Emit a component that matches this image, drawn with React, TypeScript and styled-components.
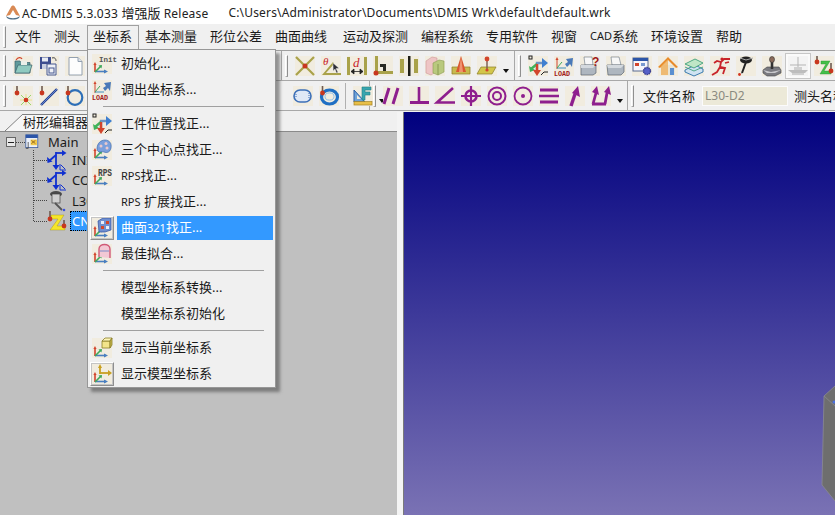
import React from "react";
import styled, { createGlobalStyle } from "styled-components";

const FONT = `"Noto Sans", "Noto Sans CJK SC", sans-serif`;

const Global = createGlobalStyle`
  html, body { margin: 0; padding: 0; background: #f0f0f0; }
  * { box-sizing: border-box; }
  body { font-family: ${FONT}; }
`;

const Root = styled.div`
  position: relative;
  width: 835px;
  height: 515px;
  overflow: hidden;
  display: flex;
  flex-direction: column;
  background: #f0f0f0;
  color: #1a1a1a;
`;

const TitleBar = styled.div`
  height: 24px;
  flex: none;
  background: #fff;
  display: flex;
  align-items: center;
  padding-left: 5px;
  font-size: 12px;
  color: #222;
  white-space: nowrap;
`;
const TitleText = styled.span`
  margin-left: 1px;
  letter-spacing: 0.2px;
`;
const TitleCjk = styled.span`
  font-size: 13px;
  letter-spacing: 0;
`;
const TitlePath = styled.span`
  margin-left: 20px;
  letter-spacing: 0.17px;
`;

const MenuBar = styled.div`
  height: 27px;
  flex: none;
  display: flex;
  align-items: stretch;
  border-bottom: 1px solid #a0a0a0;
  background: #f0f0f0;
`;
const Grip = styled.div<{ $mr?: number }>`
  width: 3px;
  height: 22px;
  margin: 0 ${(p) => p.$mr ?? 7}px 0 3px;
  align-self: center;
  flex: none;
  border: 1px solid #a9a9a9;
  border-right-color: #8f8f8f;
  border-top-color: #fff;
  border-left-color: #fff;
`;
const MenuItem = styled.div<{ $active?: boolean; $w: number; $ml?: number }>`
  width: ${(p) => p.$w}px;
  flex: none;
  margin-left: ${(p) => p.$ml ?? 0}px;
  margin-top: 1px;
  padding-bottom: 6px;
  display: flex;
  align-items: center;
  justify-content: center;
  font-size: 13px;
  white-space: nowrap;
  border: 1px solid ${(p) => (p.$active ? "#a0a0a0" : "transparent")};
  border-bottom: none;
`;
const Small = styled.span`
  font-size: 11px;
`;

const ToolRow = styled.div`
  height: 30px;
  flex: none;
  display: flex;
  border-bottom: 1px solid #a8a8a8;
  background: #f0f0f0;
`;
const Segment = styled.div<{ $w: number }>`
  width: ${(p) => p.$w}px;
  flex: none;
  display: flex;
  align-items: center;
  border-right: 1px solid #a8a8a8;
  &:last-child { border-right: none; flex: 1; overflow: hidden; }
`;
const Icons = styled.div<{ $ml?: number }>`
  display: flex;
  gap: 6px;
  align-items: center;
  margin-left: ${(p) => p.$ml ?? 0}px;
`;
const IconBox = styled.div<{ $raised?: boolean }>`
  width: 20px;
  height: 20px;
  flex: none;
  background: #f1ecdf;
  svg { display: block; width: 20px; height: 20px; overflow: visible; }
  ${(p) =>
    p.$raised &&
    `background: #f4f4f4;
     outline: 2px solid #fafafa;
     box-shadow: 0 0 0 3px #c6c6c6;`}
`;
const DropArrow = styled.div`
  width: 0;
  height: 0;
  flex: none;
  margin-left: 6px;
  margin-top: 11px;
  border: 3.5px solid transparent;
  border-top: 4px solid #111;
  border-bottom: none;
`;
const VSep = styled.div`
  width: 1px;
  height: 26px;
  flex: none;
  margin: 0 7px 0 6px;
  background: #b0b0b0;
`;
const FieldLabel = styled.span<{ $ml?: number }>`
  font-size: 13px;
  margin-left: ${(p) => p.$ml ?? 0}px;
  white-space: nowrap;
  flex: none;
`;
const FileInput = styled.div`
  width: 86px;
  height: 20px;
  flex: none;
  margin: 0 6px 0 7px;
  background: #ece9d8;
  border: 1px solid #fbfbfb;
  color: #8a8a80;
  font-size: 12px;
  line-height: 18px;
  padding-left: 2px;
`;

const Workspace = styled.div`
  flex: 1;
  display: flex;
  min-height: 0;
  margin-top: 1px;
`;
const LeftPane = styled.div`
  width: 397px;
  flex: none;
  display: flex;
  flex-direction: column;
`;
const TabStrip = styled.div`
  height: 19px;
  flex: none;
  display: flex;
  align-items: flex-end;
  padding-left: 5px;
  background: #f0f0f0;
`;
const Tab = styled.div`
  display: flex;
  align-items: flex-end;
  height: 17px;
  font-size: 13px;
  svg { display: block; width: 18px; height: 17px; flex: none; }
`;
const TabLabel = styled.div`
  height: 17px;
  line-height: 14px;
  width: 90px;
  border-top: 1px solid #808080;
  background: #f7f7f7;
  white-space: nowrap;
`;
const TreePanel = styled.div`
  flex: 1;
  background: #c0c0c0;
  padding: 2px 0 0 6px;
  border-top: 1px solid #8a8a8a;
  display: flex;
  flex-direction: column;
  font-size: 13px;
`;
const RootRow = styled.div`
  display: flex;
  align-items: center;
  height: 16px;
  flex: none;
`;
const Expander = styled.div`
  width: 10px;
  height: 10px;
  flex: none;
  border: 1px solid #666;
  background: #e8e8e8;
  display: flex;
  align-items: center;
  justify-content: center;
  &::after { content: ""; width: 6px; height: 1px; background: #222; }
`;
const DotsH = styled.div<{ $w: number }>`
  width: ${(p) => p.$w}px;
  flex: none;
  border-top: 1px dotted #444;
`;
const TreeIcon = styled.div<{ $w?: number }>`
  width: ${(p) => p.$w ?? 20}px;
  height: ${(p) => p.$w ?? 20}px;
  flex: none;
  svg { display: block; width: 100%; height: 100%; overflow: visible; }
`;
const RootLabel = styled.span`
  margin-left: 7px;
`;
const ChildList = styled.div`
  margin-left: 27px;
  border-left: 1px dotted #444;
  height: 71px;
  display: flex;
  flex-direction: column;
`;
const ChildRow = styled.div`
  height: 20.33px;
  display: flex;
  align-items: center;
  flex: none;
`;
const ChildLabel = styled.span<{ $sel?: boolean }>`
  margin-left: 3px;
  height: 20px;
  line-height: 18px;
  padding: 0 1px;
  white-space: nowrap;
  border: 1px dotted ${(p) => (p.$sel ? "#000" : "transparent")};
  background: ${(p) => (p.$sel ? "#3399ff" : "transparent")};
  color: ${(p) => (p.$sel ? "#fff" : "#1a1a1a")};
  width: ${(p) => (p.$sel ? "40px" : "auto")};
`;

const Splitter = styled.div`
  width: 7px;
  flex: none;
  background: #f4f4f4;
  border-right: 1px solid #7a7a7a;
`;
const Viewport = styled.div`
  flex: 1;
  position: relative;
  background: linear-gradient(180deg, #00007f 0%, #7a72b4 100%);
  svg { position: absolute; right: 0; bottom: 14px; display: block; }
`;

const Dropdown = styled.div`
  position: absolute;
  left: 87px;
  top: 49px;
  width: 189px;
  height: 339px;
  padding: 0 1px;
  background: #f0f0f0;
  border: 1px solid #979797;
  box-shadow: 4px 4px 3px rgba(70, 70, 70, 0.55);
  display: flex;
  flex-direction: column;
`;
const DropRow = styled.div`
  height: 26px;
  flex: none;
  display: flex;
  align-items: flex-end;
  font-size: 13px;
`;
const Slot = styled.div<{ $raised?: boolean }>`
  width: 24px;
  height: 24px;
  flex: none;
  margin-left: 1px;
  display: flex;
  align-items: center;
  justify-content: center;
  border: 1px solid transparent;
  ${(p) =>
    p.$raised &&
    `border-color: #fff #8e8e8e #8e8e8e #fff;
     outline: 1px solid #c4c4c4;
     outline-offset: -2px;`}
  svg { display: block; width: 20px; height: 20px; overflow: visible; }
`;
const DropLabel = styled.div<{ $hl?: boolean }>`
  width: 156px;
  height: 24px;
  margin-left: 3px;
  padding-left: 4px;
  line-height: 22px;
  white-space: nowrap;
  background: ${(p) => (p.$hl ? "#3399ff" : "transparent")};
  color: ${(p) => (p.$hl ? "#fff" : "#1a1a1a")};
`;
const DropSep = styled.div`
  height: 8px;
  flex: none;
  display: flex;
  align-items: flex-end;
  padding: 0 10px 0 14px;
  &::after {
    content: "";
    width: 100%;
    height: 1px;
    margin-bottom: 3px;
    background: #a0a0a0;
  }
`;

const Probe = ({ x = 5, y = 9, h = 8 }: { x?: number; y?: number; h?: number }) => (
  <>
    <rect x={x - 0.8} y={y - h} width={1.6} height={h} fill="#6e5a50" />
    <circle cx={x} cy={y} r={2.4} fill="#c8371f" />
  </>
);
const OLIVE = "#a9a24a";
const PURPLE = "#8e1f8e";

const CoordBase = () => (
  <>
    <path d="M3 18V10" stroke="#d2452c" strokeWidth="1.6" />
    <path d="M1.4 11 3 8l1.6 3z" fill="#d2452c" />
    <path d="M3 17.5h11" stroke="#4a7fc0" strokeWidth="1.6" />
    <path d="M12 15.5l4 2-4 2z" fill="#4a7fc0" />
    <path d="M3 18l6-6" stroke="#3fa85a" strokeWidth="1.6" />
    <path d="M6.5 11.5 10 11l-.5 3.5z" fill="#3fa85a" />
  </>
);
const LoadArt = () => (
  <>
    <path d="M3 13V3" stroke="#d2452c" />
    <path d="M1.500 4 3 1l1.500 3z" fill="#d2452c" />
    <path d="M3 12h9" stroke="#3f8fbf" />
    <path d="M3 12l5-6" stroke="#3fa85a" />
    <path d="M19 2l-1 9-2-3-3 3-2-3 3-2-2-3z" fill="#4a79b8" />
    <text x="0" y="19.500" fontFamily="Liberation Mono, monospace" fontWeight="700" fontSize="6.700" fill="#a01818">LOAD</text>
  </>
);
const CoordArt = () => (
  <>
    <rect x="1" y="0" width="3" height="3" fill="none" stroke="#222" />
    <path d="M9 17V7h6" stroke="#6f93c4" strokeWidth="2.400" fill="none" />
    <path d="M14 2l6 5-6 5z" fill="#3f7fd0" />
    <path d="M9 8 3 13" stroke="#3fb35a" strokeWidth="2.400" />
    <path d="M1 10l1 6 5-2z" fill="#3fb35a" />
    <path d="M9 8v8" stroke="#d2452c" strokeWidth="2.400" />
    <path d="M5 14h8l-4 6z" fill="#d2452c" />
    <path d="M13 19l3-3h4" stroke="#222" fill="none" />
  </>
);
const Beige = () => <rect width="20" height="20" fill="#f1ecdf" />;

const I: Record<string, React.ReactNode> = {
  open: (
    <svg viewBox="0 0 20 20">
      <path d="M2 5h5l1 1.500h9V17H2z" fill="#5f9a9c" stroke="#39606a" strokeWidth=".7" />
      <path d="M5 9h14l-2.500 8H2z" fill="#8fcac0" stroke="#39606a" strokeWidth=".7" />
      <rect x="8" y="5" width="6" height="4" fill="#e9efe9" />
      <path d="M3 4c2-3 5-3 6-1" stroke="#d2452c" strokeWidth="1.200" fill="none" />
    </svg>
  ),
  save: (
    <svg viewBox="0 0 20 20">
      <path d="M1 1h11v12H1z" fill="#3d4d8f" />
      <rect x="3" y="1.500" width="6" height="4" fill="#e8ecf4" />
      <rect x="3" y="8" width="7" height="5" fill="#c9cfe0" />
      <path d="M13 2c3-1 4 1 4 3" stroke="#444" fill="none" />
      <path d="M8 8h9v11H8z" fill="#eef0f6" stroke="#46588f" />
      <rect x="10" y="12" width="5" height="5" fill="none" stroke="#46588f" />
    </svg>
  ),
  doc: (
    <svg viewBox="0 0 20 20">
      <path d="M4 1.500h9l4 4V19H4z" fill="#fdfdfd" stroke="#93a0b0" />
      <path d="M13 1.500v4h4" fill="#dfe4ea" stroke="#93a0b0" />
    </svg>
  ),
  probePoint: (
    <svg viewBox="0 0 20 20">
      <Probe x={4} y={7} h={7} />
      <path d="M8 9l10 10M18 9 8 19" stroke="#9ad76a" strokeWidth="1" />
      <path d="M13 8v11M7 14h12" stroke="#e9e07a" strokeWidth=".8" />
      <circle cx="13" cy="14" r="2.300" fill="#d2341f" />
    </svg>
  ),
  probeLine: (
    <svg viewBox="0 0 20 20">
      <Probe x={3} y={7} h={7} />
      <path d="M2 19 18 3" stroke="#1c3c95" strokeWidth="2.400" />
      <path d="M2 19 18 3" stroke="#9cb8e8" strokeWidth=".6" />
    </svg>
  ),
  probeCircle: (
    <svg viewBox="0 0 20 20">
      <circle cx="10" cy="11.500" r="7.300" fill="none" stroke="#2d6fb8" strokeWidth="2.200" />
      <Probe x={3} y={7} h={7} />
    </svg>
  ),
  slot: (
    <svg viewBox="0 0 20 20">
      <rect x="1" y="4" width="17" height="12" rx="6" fill="#dfe8f6" stroke="#3c6fb8" strokeWidth="1.600" />
      <path d="M3 8v4" stroke="#3c6fb8" strokeDasharray="1 1" />
      <path d="M16 7v6" stroke="#3c6fb8" strokeDasharray="1 1" />
    </svg>
  ),
  coil: (
    <svg viewBox="0 0 20 20">
      <ellipse cx="10.500" cy="11" rx="8" ry="7" fill="none" stroke="#1f6fc4" strokeWidth="3.200" />
      <ellipse cx="10.500" cy="10.500" rx="4.500" ry="3.600" fill="none" stroke="#8ec0ea" strokeWidth="1" />
      <Probe x={3.500} y={7} h={7} />
    </svg>
  ),
  ruler: (
    <svg viewBox="0 0 20 20">
      <path d="M1 16V4l11 12z" fill="#6ea3d8" stroke="#2a5fa8" />
      <path d="M4 13V9l4 4z" fill="#f1ecdf" />
      <path d="M9 1h9v3h-6v2h5v3h-5v5H9z" fill="#38a5ae" stroke="#1e7f88" strokeWidth=".6" />
      <rect x="1" y="15.500" width="18" height="3.500" fill="#e8bf48" stroke="#9a7a20" strokeWidth=".6" />
    </svg>
  ),
  cross: (
    <svg viewBox="0 0 20 20">
      <path d="M1 1l18 18M19 1 1 19" stroke={OLIVE} strokeWidth="2.200" />
      <circle cx="10" cy="10" r="2.500" fill="#c8371f" />
    </svg>
  ),
  theta: (
    <svg viewBox="0 0 20 20">
      <text x="2" y="9" fontFamily="Liberation Serif, serif" fontStyle="italic" fontSize="11" fill="#c8242a">θ</text>
      <path d="M1 19 12 6l1 2L5 17h15v2z" fill={OLIVE} />
      <path d="M12 7l.2 8 1.800-2 1.500 4 1.500-.7L15 12.500l3-.3z" fill="#2d2d35" stroke="#eee" strokeWidth=".4" />
    </svg>
  ),
  dist: (
    <svg viewBox="0 0 20 20">
      <rect x="0" y="1" width="3" height="18" fill={OLIVE} />
      <rect x="17" y="1" width="3" height="18" fill={OLIVE} />
      <text x="6" y="11" fontFamily="Liberation Serif, serif" fontStyle="italic" fontSize="13" fill="#c8242a">d</text>
      <path d="M4 15.500h12M4 15.500l3-2.500v5zM16 15.500l-3-2.500v5z" stroke="#222" strokeWidth=".8" fill="#222" />
    </svg>
  ),
  perpL: (
    <svg viewBox="0 0 20 20">
      <path d="M2 0h3v15h15v3H2z" fill={OLIVE} />
      <path d="M7 8h6v7h-3v-4H7z" fill="#2a2a22" />
      <circle cx="3" cy="17" r="2.500" fill="#c8371f" />
    </svg>
  ),
  bars: (
    <svg viewBox="0 0 20 20">
      <rect x="1" y="3" width="4" height="14" fill={OLIVE} />
      <rect x="9" y="0" width="2.500" height="20" fill="#1d1d16" />
      <rect x="15" y="3" width="4" height="14" fill={OLIVE} />
    </svg>
  ),
  panels: (
    <svg viewBox="0 0 20 20">
      <path d="M1 5l6-4 5 1v13l-6 4-5-2z" fill="#eec5c5" stroke="#c99" strokeWidth=".6" />
      <path d="M8 7l6-3 5 1v11l-6 3-5-2z" fill="#b9c97e" stroke="#8a9a52" strokeWidth=".6" />
      <path d="M13 8v11" stroke="#8a9a52" />
    </svg>
  ),
  cone: (
    <svg viewBox="0 0 20 20">
      <path d="M1 11h18v7H1z" fill="#c9b94e" stroke="#8a7e2a" strokeWidth=".7" />
      <path d="M10 0l5 16H5z" fill="#d9582f" />
      <path d="M10 0l2 16H8z" fill="#ef9470" />
    </svg>
  ),
  plate: (
    <svg viewBox="0 0 20 20">
      <path d="M4 11h15l-4 7H0z" fill="#d3c64a" stroke="#8a7e2a" strokeWidth=".7" />
      <path d="M10 3v11" stroke="#7a5a4a" strokeWidth="1.400" />
      <circle cx="10" cy="3" r="2.400" fill="#d2452c" />
      <circle cx="10" cy="14" r="1.600" fill="#d2452c" />
    </svg>
  ),
  coord: (
    <svg viewBox="0 0 20 20">
      <CoordArt />
    </svg>
  ),
  load: (
    <svg viewBox="0 0 20 20">
      <LoadArt />
    </svg>
  ),
  printerQ: (
    <svg viewBox="0 0 20 20">
      <path d="M4 1h8l1 8H5z" fill="#f7f7f7" stroke="#7a8590" strokeWidth=".7" />
      <path d="M1 9h15v8l-3 2H1z" fill="#aeb6bf" stroke="#5c6570" strokeWidth=".7" />
      <path d="M1 9h12l3 0-3 3H1z" fill="#d4d9de" />
      <text x="12" y="10" fontFamily="Liberation Sans, sans-serif" fontWeight="700" fontSize="12" fill="#a01818">?</text>
    </svg>
  ),
  printer: (
    <svg viewBox="0 0 20 20">
      <path d="M5 1h8l2 8H6z" fill="#f7f7f7" stroke="#7a8590" strokeWidth=".7" />
      <path d="M1 9h17v7l-3 3H2z" fill="#aeb6bf" stroke="#5c6570" strokeWidth=".7" />
      <path d="M1 9h17l-3 3H2z" fill="#d4d9de" />
    </svg>
  ),
  windowGear: (
    <svg viewBox="0 0 20 20">
      <rect x="1" y="2" width="15" height="13" fill="#f6f6fb" stroke="#5a6a90" />
      <rect x="1" y="2" width="15" height="3" fill="#2c55a8" />
      <rect x="3" y="7" width="4" height="3" fill="#d2452c" />
      <rect x="9" y="7" width="4" height="3" fill="#7a9ad0" />
      <circle cx="15" cy="15" r="3.500" fill="#5560c8" stroke="#3a3f90" strokeDasharray="1.500 .7" strokeWidth="1.400" />
    </svg>
  ),
  house: (
    <svg viewBox="0 0 20 20">
      <path d="M3 9h14v10H3z" fill="#e9e4d4" />
      <path d="M12 12h4v7h-4z" fill="#5a8fd0" />
      <path d="M0 11 10 1l10 10-2 1L10 4 2 12z" fill="#e88a2a" />
      <path d="M3 10l7-7v16H3z" fill="#f0a84a" opacity=".7" />
    </svg>
  ),
  layers: (
    <svg viewBox="0 0 20 20">
      <path d="M1 14l10-5 8 4v3l-9 4-9-4z" fill="#cfe3f2" stroke="#2a6fa8" strokeWidth=".9" />
      <path d="M1 8l10-5 8 4-9 5z" fill="#bfe6c6" stroke="#3f9f7a" strokeWidth=".9" />
      <path d="M1 11l9 4 9-4" stroke="#3f9f7a" fill="none" strokeWidth=".9" />
    </svg>
  ),
  runner: (
    <svg viewBox="0 0 20 20">
      <path d="M20 3h-6l-3 3-4-1-3 2M11 6l-1 5 5 1-2 6M10 11l-3 5-5 3M15 7l4-1" stroke="#c8242a" strokeWidth="1.800" fill="none" />
      <circle cx="12" cy="3" r="1.600" fill="#c8242a" />
    </svg>
  ),
  blackProbe: (
    <svg viewBox="0 0 20 20">
      <ellipse cx="10" cy="4" rx="6" ry="3.500" fill="#222" />
      <path d="M4 2l6 2 7-2" stroke="#aaa" fill="none" />
      <path d="M10 6 6 17" stroke="#222" strokeWidth="2" />
      <path d="M6 17 4 19" stroke="#b8b8b8" />
      <circle cx="3.500" cy="18.500" r="1.400" fill="#d2341f" />
    </svg>
  ),
  joystick: (
    <svg viewBox="0 0 20 20">
      <path d="M1 14l4-3h12l2 3v3l-6 3H5l-4-3z" fill="#7a7a80" stroke="#444" strokeWidth=".6" />
      <path d="M1 14l8 2 10-2-6 3H5z" fill="#c8c8cc" />
      <path d="M10 4v9" stroke="#333" strokeWidth="2.600" />
      <ellipse cx="10" cy="3.500" rx="2.500" ry="3" fill="#8a6a5a" stroke="#333" strokeWidth=".6" />
    </svg>
  ),
  fadedCross: (
    <svg viewBox="0 0 20 20">
      <path d="M10 1v13M2 9h16" stroke="#b5b5b5" />
      <path d="M0 14h20l-3 3H4z" fill="#bdbdbd" />
      <path d="M6 11h8v3H6z" fill="#d0d0d0" />
      <path d="M4 17h12v2H4z" fill="#cfcfcf" />
    </svg>
  ),
  zprobe: (
    <svg viewBox="0 0 20 20">
      <path d="M7 5h9L10 15h7v3H6l6-10H7z" fill="#43c04a" stroke="#2a8a30" strokeWidth=".4" />
      <Probe x={3} y={6} h={6} />
      <Probe x={17} y={15} h={8} />
    </svg>
  ),
  parallel: (
    <svg viewBox="0 0 20 20">
      <path d="M6 2 1 18M15 2l-5 16" stroke={PURPLE} strokeWidth="3" />
    </svg>
  ),
  perp: (
    <svg viewBox="0 0 20 20">
      <path d="M10 1v15" stroke={PURPLE} strokeWidth="2.600" />
      <path d="M1 16.500h19" stroke={PURPLE} strokeWidth="3" />
    </svg>
  ),
  angle: (
    <svg viewBox="0 0 20 20">
      <path d="M18 2 2 16.500h18" stroke={PURPLE} strokeWidth="2.600" fill="none" />
    </svg>
  ),
  target: (
    <svg viewBox="0 0 20 20">
      <circle cx="10" cy="10" r="5.500" fill="none" stroke={PURPLE} strokeWidth="2.600" />
      <path d="M10 0v20M0 10h20" stroke={PURPLE} strokeWidth="2.200" />
    </svg>
  ),
  concentric: (
    <svg viewBox="0 0 20 20">
      <circle cx="10" cy="10" r="8.500" fill="none" stroke={PURPLE} strokeWidth="2" />
      <circle cx="10" cy="10" r="4" fill="none" stroke={PURPLE} strokeWidth="2" />
    </svg>
  ),
  dotCircle: (
    <svg viewBox="0 0 20 20">
      <circle cx="10" cy="10" r="8.500" fill="none" stroke={PURPLE} strokeWidth="1.800" />
      <circle cx="10" cy="10" r="2" fill={PURPLE} />
    </svg>
  ),
  symmetry: (
    <svg viewBox="0 0 20 20">
      <path d="M1 4h18M1 16h18" stroke={PURPLE} strokeWidth="3" />
      <path d="M0 10h20" stroke={PURPLE} strokeWidth="2.500" />
    </svg>
  ),
  runout: (
    <svg viewBox="0 0 20 20">
      <path d="M6 20 10 8" stroke={PURPLE} strokeWidth="3.400" />
      <path d="M13 0l2 11-8-4z" fill={PURPLE} />
    </svg>
  ),
  runout2: (
    <svg viewBox="0 0 20 20">
      <path d="M2 18 5 7M14 18l2-11M1 18h14" stroke={PURPLE} strokeWidth="2.800" fill="none" />
      <path d="M6 0l2 9-7-3zM18 0l2 9-7-3z" fill={PURPLE} />
    </svg>
  ),
  init: (
    <svg viewBox="0 0 20 20">
      <Beige />
      <CoordBase />
      <text x="7" y="8" fontFamily="Liberation Mono, monospace" fontWeight="700" fontSize="7.500" fill="#555">Init</text>
    </svg>
  ),
  loadM: (
    <svg viewBox="0 0 20 20">
      <Beige />
      <LoadArt />
    </svg>
  ),
  coordM: (
    <svg viewBox="0 0 20 20">
      <Beige />
      <CoordArt />
    </svg>
  ),
  threeM: (
    <svg viewBox="0 0 20 20">
      <Beige />
      <CoordBase />
      <path d="M5 9c0-6 4-9 8-9s7 3 6 8-5 5-7 4-6 2-7-3z" fill="#7a9fdc" stroke="#2f5fa8" strokeWidth=".6" />
      <circle cx="9" cy="6" r="1.500" fill="#e9c8cc" />
      <circle cx="14" cy="3.500" r="1.500" fill="#e9c8cc" />
      <circle cx="15" cy="8" r="1.500" fill="#e9c8cc" />
    </svg>
  ),
  rpsM: (
    <svg viewBox="0 0 20 20">
      <Beige />
      <CoordBase />
      <text x="6" y="10" fontFamily="Liberation Mono, monospace" fontWeight="700" fontSize="11" textLength="14" lengthAdjust="spacingAndGlyphs" fill="#444">RPS</text>
    </svg>
  ),
  surfM: (
    <svg viewBox="0 0 20 20">
      <Beige />
      <CoordBase />
      <path d="M6 3l5-3h8v12l-6 2H7z" fill="#6f8fd0" stroke="#2f4fa0" strokeWidth=".7" />
      <rect x="9" y="3" width="3" height="3" fill="#e8eefb" />
      <rect x="14" y="3" width="3" height="3" fill="#d2452c" />
      <rect x="9" y="8" width="3" height="3" fill="#d2452c" />
      <rect x="14" y="8" width="3" height="3" fill="#e8eefb" />
    </svg>
  ),
  bestM: (
    <svg viewBox="0 0 20 20">
      <Beige />
      <CoordBase />
      <path d="M7 13V5c0-6 11-6 11 0v9" fill="#f2c8d4" stroke="#d05a78" strokeWidth="1.400" />
      <path d="M8 7h9" stroke="#7a8ac8" />
    </svg>
  ),
  cubeM: (
    <svg viewBox="0 0 20 20">
      <Beige />
      <CoordBase />
      <path d="M10 3h8v7h-8z" fill="#f2e48a" stroke="#8a7e2a" strokeWidth=".8" />
      <path d="M10 3l3-3h7l-2 3z" fill="#fbf3b8" stroke="#8a7e2a" strokeWidth=".8" />
      <path d="M18 3l2-3v7l-2 3z" fill="#c9b94e" stroke="#8a7e2a" strokeWidth=".8" />
    </svg>
  ),
  modelM: (
    <svg viewBox="0 0 20 20">
      <Beige />
      <CoordBase />
      <path d="M8 10V3" stroke="#c9a020" strokeWidth="1.800" />
      <path d="M6 4l2-4 2 4z" fill="#c9a020" />
      <path d="M8 9h9" stroke="#c9a020" strokeWidth="1.800" />
      <path d="M16 6l4 3-4 3z" fill="#c9a020" />
    </svg>
  ),
  mainTree: (
    <svg viewBox="0 0 20 20">
      <rect x="1" y="1" width="15" height="16" fill="#eaf0fa" stroke="#3a5a9a" />
      <rect x="1" y="1" width="15" height="4" fill="#2c55a8" />
      <rect x="7" y="7" width="8" height="7" fill="#f2c94a" />
      <path d="M8 8l5 4M13 8l-5 4" stroke="#8a5a1a" />
      <path d="M1 18h3v-8" stroke="#444" fill="none" />
    </svg>
  ),
  treeCoord: (
    <svg viewBox="0 0 20 20">
      <path d="M9 2v14" stroke="#1030d0" strokeWidth="1.800" />
      <path d="M9 3h9" stroke="#1030d0" strokeWidth="1.800" />
      <path d="M15 0l4.500 3L15 6z" fill="#1030d0" />
      <path d="M9 5 2 11" stroke="#1030d0" strokeWidth="1.800" />
      <path d="M0 7l.5 6 5-1.500z" fill="#1030d0" />
      <path d="M5.500 15h7L9 20z" fill="#1030d0" />
      <path d="M13 14v6h6" fill="none" stroke="#1030d0" />
      <path d="M14 15l4 4" stroke="#1030d0" />
    </svg>
  ),
  treeProbe: (
    <svg viewBox="0 0 20 20">
      <ellipse cx="9" cy="3" rx="6" ry="3" fill="#4a4a4a" />
      <rect x="5" y="3" width="8" height="9" fill="#cfcfcf" stroke="#444" strokeWidth=".7" />
      <path d="M8 12l7 7" stroke="#555" strokeWidth="1.800" />
      <circle cx="17" cy="19" r="1.300" fill="#3a50e0" />
    </svg>
  ),
  treeZ: (
    <svg viewBox="0 0 20 20">
      <path d="M4 4h13L10 15h8v4H3l8-11H4z" fill="#f5e52a" stroke="#a09010" strokeWidth=".4" />
      <Probe x={3} y={8} h={8} />
      <Probe x={17} y={15} h={6} />
    </svg>
  ),
  logo: (
    <svg viewBox="0 0 16 16">
      <path d="M1 12 6 3c1-2 3-2 4 0l5 9-4-1-3-5-3 5z" fill="#d98a55" />
      <path d="M1 12c4 3 10 3 14 0l-1 2c-3 2-9 2-12 0z" fill="#4f6f88" />
    </svg>
  ),
};

const IconStrip = ({ names }: { names: string[] }) => (
  <>
    {names.map((n) => (
      <IconBox key={n}>{I[n]}</IconBox>
    ))}
  </>
);

type Entry =
  | { sep: true }
  | { icon?: string; label: React.ReactNode; hl?: boolean; raised?: boolean; sep?: false };

const menuEntries: Entry[] = [
  { icon: "init", label: "初始化..." },
  { icon: "loadM", label: "调出坐标系..." },
  { sep: true },
  { icon: "coordM", label: "工件位置找正..." },
  { icon: "threeM", label: "三个中心点找正..." },
  { icon: "rpsM", label: <><Small>RPS</Small>找正...</> },
  { label: <><Small>RPS</Small> 扩展找正...</> },
  { icon: "surfM", label: <>曲面<Small>321</Small>找正...</>, hl: true, raised: true },
  { icon: "bestM", label: "最佳拟合..." },
  { sep: true },
  { label: "模型坐标系转换..." },
  { label: "模型坐标系初始化" },
  { sep: true },
  { icon: "cubeM", label: "显示当前坐标系" },
  { icon: "modelM", label: "显示模型坐标系", raised: true },
];

const topMenus: { label: React.ReactNode; w: number; active?: boolean; ml?: number }[] = [
  { label: "文件", w: 39 },
  { label: "测头", w: 39 },
  { label: "坐标系", w: 52, active: true },
  { label: "基本测量", w: 65 },
  { label: "形位公差", w: 65 },
  { label: "曲面曲线", w: 65 },
  { label: "运动及探测", w: 78, ml: 3 },
  { label: "编程系统", w: 65 },
  { label: "专用软件", w: 65 },
  { label: "视窗", w: 39 },
  { label: <><Small>CAD</Small>系统</>, w: 61 },
  { label: "环境设置", w: 65 },
  { label: "帮助", w: 39 },
];

const treeChildren = [
  { icon: "treeCoord", label: "INI" },
  { icon: "treeCoord", label: "CO" },
  { icon: "treeProbe", label: "L30" },
  { icon: "treeZ", label: "CN", sel: true },
];

export default function App() {
  return (
    <Root>
      <Global />
      <TitleBar>
        <TreeIcon $w={16}>{I.logo}</TreeIcon>
        <TitleText>AC-DMIS 5.3.033 <TitleCjk>增强版</TitleCjk> Release</TitleText>
        <TitlePath>C:\Users\Administrator\Documents\DMIS Wrk\default\default.wrk</TitlePath>
      </TitleBar>

      <MenuBar>
        <Grip $mr={2.5} />
        {topMenus.map((m, i) => (
          <MenuItem key={i} $w={m.w} $active={m.active} $ml={m.ml}>
            {m.label}
          </MenuItem>
        ))}
      </MenuBar>

      <ToolRow>
        <Segment $w={282}>
          <Grip />
          <Icons>
            <IconStrip names={["open", "save", "doc"]} />
          </Icons>
        </Segment>
        <Segment $w={233}>
          <Grip />
          <Icons>
            <IconStrip names={["cross", "theta", "dist", "perpL", "bars", "panels", "cone", "plate"]} />
          </Icons>
          <DropArrow />
        </Segment>
        <Segment $w={320}>
          <Grip />
          <Icons>
            <IconStrip
              names={["coord", "load", "printerQ", "printer", "windowGear", "house", "layers", "runner", "blackProbe", "joystick"]}
            />
            <IconBox $raised>{I.fadedCross}</IconBox>
            <IconBox>{I.zprobe}</IconBox>
          </Icons>
        </Segment>
      </ToolRow>

      <ToolRow>
        <Segment $w={370}>
          <Grip />
          <Icons>
            <IconStrip names={["probePoint", "probeLine", "probeCircle"]} />
          </Icons>
          <Icons $ml={208}>
            <IconStrip names={["slot", "coil"]} />
          </Icons>
          <VSep />
          <IconBox>{I.ruler}</IconBox>
          <DropArrow />
        </Segment>
        <Segment $w={258}>
          <Grip />
          <Icons>
            <IconStrip
              names={["parallel", "perp", "angle", "target", "concentric", "dotCircle", "symmetry", "runout", "runout2"]}
            />
          </Icons>
          <DropArrow />
        </Segment>
        <Segment $w={207}>
          <Grip />
          <FieldLabel $ml={2}>文件名称</FieldLabel>
          <FileInput>L30-D2</FileInput>
          <FieldLabel>测头名称</FieldLabel>
        </Segment>
      </ToolRow>

      <Workspace>
        <LeftPane>
          <TabStrip>
            <Tab>
              <svg viewBox="0 0 18 17">
                <path d="M0 17 18 0v17z" fill="#f7f7f7" />
                <path d="M0 17 18 0" stroke="#808080" fill="none" />
              </svg>
              <TabLabel>树形编辑器</TabLabel>
            </Tab>
          </TabStrip>
          <TreePanel>
            <RootRow>
              <Expander />
              <DotsH $w={9} />
              <TreeIcon $w={16}>{I.mainTree}</TreeIcon>
              <RootLabel>Main</RootLabel>
            </RootRow>
            <ChildList>
              {treeChildren.map((c) => (
                <ChildRow key={c.label}>
                  <DotsH $w={13} />
                  <TreeIcon>{I[c.icon]}</TreeIcon>
                  <ChildLabel $sel={c.sel}>{c.label}</ChildLabel>
                </ChildRow>
              ))}
            </ChildList>
          </TreePanel>
        </LeftPane>
        <Splitter />
        <Viewport>
          <svg width="14" height="115" viewBox="0 0 14 115">
            <path d="M3 10 14 0v115L1 99z" fill="#6e6e6e" />
            <path d="M14 20 3 10l-2 89 13 16" fill="none" stroke="#8a8a90" strokeWidth=".8" />
            <path d="M3 10 14 0" stroke="#8a8a90" strokeWidth=".8" />
            <circle cx="13" cy="16" r="1.500" fill="#4a70e0" />
          </svg>
        </Viewport>
      </Workspace>

      <Dropdown>
        {menuEntries.map((e, i) =>
          e.sep ? (
            <DropSep key={i} />
          ) : (
            <DropRow key={i}>
              <Slot $raised={e.raised}>{e.icon ? I[e.icon] : null}</Slot>
              <DropLabel $hl={e.hl}>{e.label}</DropLabel>
            </DropRow>
          )
        )}
      </Dropdown>
    </Root>
  );
}
